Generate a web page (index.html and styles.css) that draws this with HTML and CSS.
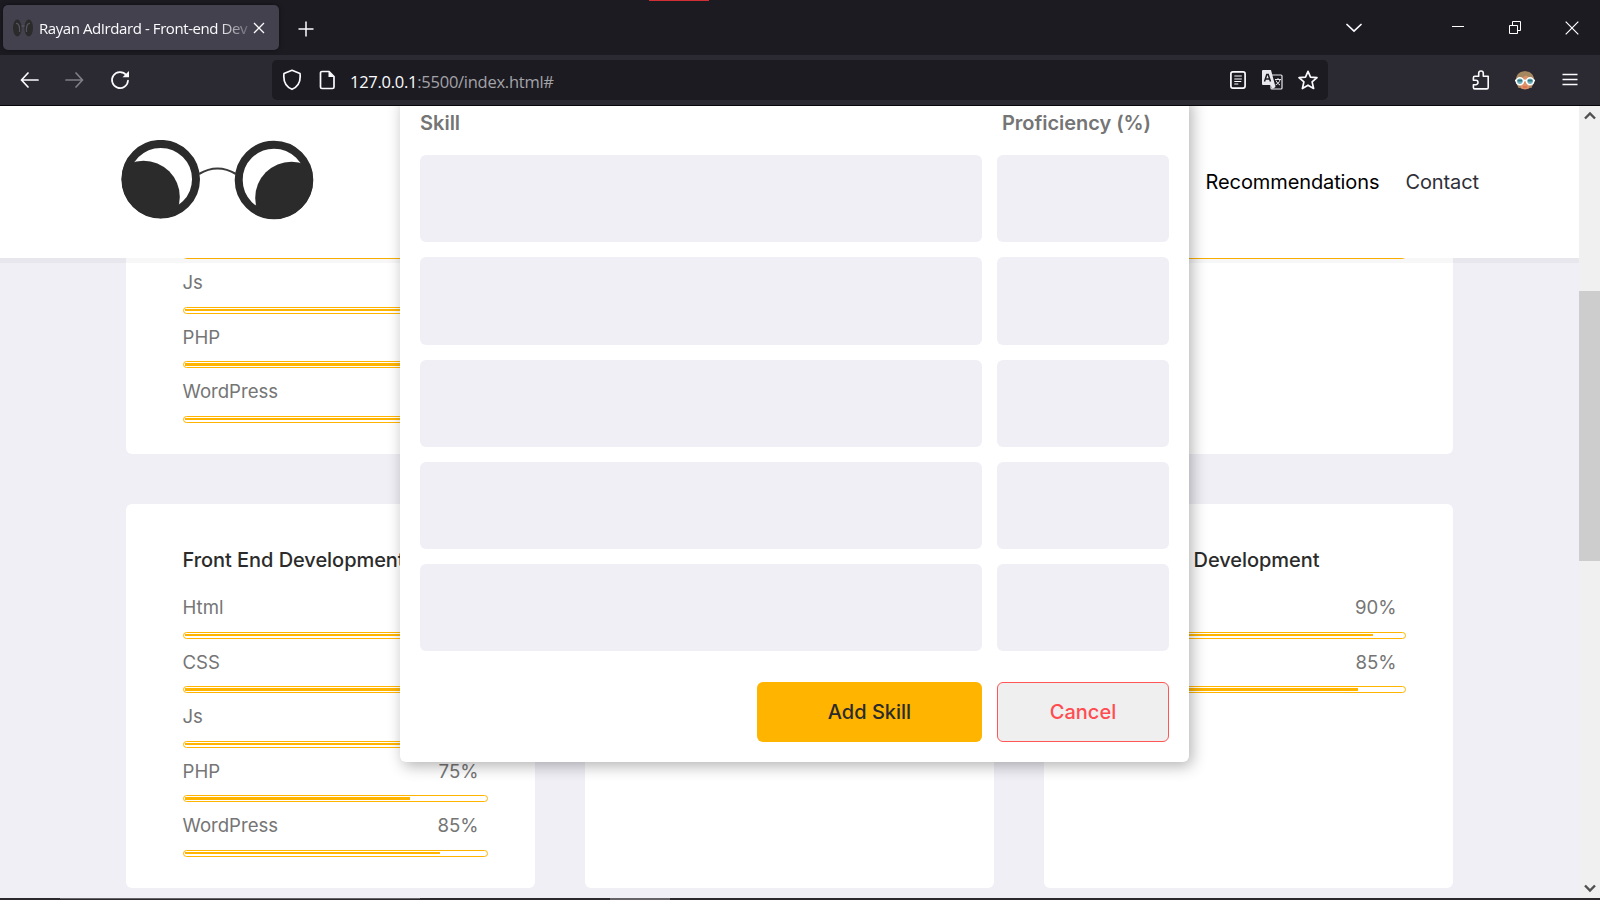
FILE: index.html
```html
<!DOCTYPE html>
<html lang="en">
<head>
<meta charset="utf-8">
<title>Rayan AdIrdard - Front-end Developer</title>
<link rel="stylesheet" href="styles.css">
</head>
<body>
<div class="tabbar">
  <div class="tab">
    <svg class="favicon" width="20" height="18" viewBox="0 0 20 18"><g fill="#2b2b2b"><ellipse cx="4.3" cy="9" rx="4.3" ry="8.5"/><ellipse cx="15.7" cy="9" rx="4.3" ry="8.5"/></g><path d="M3 4.500C6 4 7 8 6.500 13M17 4.500C14 4 13 8 13.500 13M8.500 7h3" fill="none" stroke="#55535e" stroke-width="1.300"/></svg>
    <span class="tab-title">Rayan AdIrdard - Front-end Dev</span>
    <svg class="tab-close" width="12" height="12" viewBox="0 0 12 12"><path d="M1 1l10 10M11 1L1 11" stroke="#fbfbfe" stroke-width="1.300"/></svg>
  </div>
  <svg class="newtab" width="16" height="16" viewBox="0 0 16 16"><path d="M8 .5v15M.5 8h15" stroke="#fbfbfe" stroke-width="1.500"/></svg>
  <div class="window-controls">
    <svg width="16" height="10" viewBox="0 0 16 10"><path d="M1 1.500l7 6.500 7-6.500" fill="none" stroke="#fbfbfe" stroke-width="1.700" stroke-linecap="round"/></svg>
    <svg width="12" height="12" viewBox="0 0 12 12"><path d="M0 4.500h12" stroke="#fff"/></svg>
    <svg width="12" height="13" viewBox="0 0 12 13"><path d="M.5 4.500h8v8h-8zM3.500 4.500v-4h8v9h-3" fill="none" stroke="#fff"/></svg>
    <svg width="14" height="14" viewBox="0 0 14 14"><path d="M.7.700l12.600 12.600M13.300.7L.7 13.300" stroke="#fff" stroke-width="1.200"/></svg>
  </div>
  <div class="top-strip"></div>
</div>
<div class="toolbar">
  <div class="nav-buttons">
    <svg width="19" height="16" viewBox="0 0 19 16"><path d="M18 8H1.500M8 1L1.500 8 8 15" fill="none" stroke="#fbfbfe" stroke-width="1.700" stroke-linecap="round" stroke-linejoin="round"/></svg>
    <svg width="19" height="16" viewBox="0 0 19 16"><path d="M1 8h16.500M11 1l6.500 7L11 15" fill="none" stroke="#7f7e86" stroke-width="1.700" stroke-linecap="round" stroke-linejoin="round"/></svg>
    <svg width="20" height="20" viewBox="0 0 20 20"><path d="M16.200 5A8 8 0 1 0 18 10.500" fill="none" stroke="#fbfbfe" stroke-width="1.700" stroke-linecap="round"/><path d="M19 1v6.200h-6.500z" fill="#fbfbfe"/></svg>
  </div>
  <div class="urlbar">
    <svg width="20" height="22" viewBox="0 0 20 22"><path d="M10 1.300L18 4.500C18.800 11 16.500 17.500 10 20.300 3.500 17.500 1.200 11 2 4.500z" fill="none" stroke="#fbfbfe" stroke-width="1.700" stroke-linejoin="round"/></svg>
    <svg class="page-icon" width="16" height="20" viewBox="0 0 16 20"><path d="M3 1.500h7l5 5V17a1.500 1.500 0 0 1-1.500 1.500H3A1.500 1.500 0 0 1 1.500 17V3A1.500 1.500 0 0 1 3 1.500z" fill="none" stroke="#fbfbfe" stroke-width="1.700"/><path d="M9.500 1v6H15z" fill="#fbfbfe"/></svg>
    <span class="url"><b>127.0.0.1</b>:5500/index.html#</span>
    <div class="url-actions">
      <svg width="16" height="18" viewBox="0 0 16 18"><rect x=".9" y=".9" width="14.200" height="16.200" rx="2" fill="none" stroke="#fbfbfe" stroke-width="1.700"/><path d="M4.300 5h7.500M4.300 8h7.500M4.300 10.500h7M4.300 13h4" stroke="#fbfbfe" stroke-width="1.200"/></svg>
      <svg width="21" height="20" viewBox="0 0 21 20"><rect x="9" y="5" width="11" height="14" rx="1" fill="none" stroke="#e8e8ee" stroke-width="1.200"/><path d="M13 9.500h6M16 8v1.500M18 9.500c-.5 3-2.500 4.500-4.500 5.500M14 10.500c.8 2 2.500 3.500 4 4.500" fill="none" stroke="#e8e8ee"/><path d="M1 0h8l4.500 17-3 2-2-4H1a1 1 0 0 1-1-1V1a1 1 0 0 1 1-1z" fill="#e8e8ee"/><path d="M2.500 11.500l2.300-7h1.400l2.300 7M3.500 9h4" fill="none" stroke="#1c1b22" stroke-width="1.500"/></svg>
      <svg width="20" height="20" viewBox="0 0 20 20"><path d="M10 1.300l2.500 5.800 6.500.6-4.900 4.200 1.500 6.600L10 15.200l-5.600 3.300 1.500-6.600L1 7.700l6.500-.6z" fill="none" stroke="#fbfbfe" stroke-width="1.700" stroke-linejoin="round"/></svg>
    </div>
  </div>
  <div class="tools">
    <svg width="18" height="20" viewBox="0 0 18 20"><path d="M2.800 18.900h12a1.400 1.400 0 0 0 1.400-1.400V6.300H11.300V3.300a2.300 2.300 0 0 0-4.600 0v3H2.800a1.400 1.400 0 0 0-1.400 1.400v2.600h2.400a2.200 2.200 0 0 1 0 4.400H1.400v2.800a1.400 1.400 0 0 0 1.400 1.400z" fill="none" stroke="#fbfbfe" stroke-width="1.600" stroke-linejoin="round"/></svg>
    <svg width="20" height="19" viewBox="0 0 20 19"><circle cx="10" cy="9.500" r="9" fill="#dd9268"/><path d="M1 9.500C1 3 5 .3 10 .3S19 3 19 9.500L15.500 7 11 4.500 5 8z" fill="#a58860"/><path d="M1.500 12l2 5 2.500 0-1-4zM18.500 12l-2 5-2.500 0 1-4z" fill="#a58860"/><path d="M0 9.500h20" stroke="#fff" stroke-width="1.800"/><circle cx="4.900" cy="10.300" r="3.500" fill="#6eb0ba" stroke="#fff" stroke-width="1.600"/><circle cx="15.100" cy="10.300" r="3.500" fill="#6eb0ba" stroke="#fff" stroke-width="1.600"/><path d="M2.500 9.600h4.800M12.700 9.600h4.800" stroke="#2f7482" stroke-width="1.600"/><path d="M8 16h4" stroke="#e35b45"/></svg>
    <svg width="16" height="14" viewBox="0 0 16 14"><path d="M.5 1.500h15M.5 6.500h15M.5 11.500h15" stroke="#fbfbfe" stroke-width="1.500"/></svg>
  </div>
</div>
<div class="viewport">
  <main class="page">
    <header class="site-header">
      <svg class="logo" width="194" height="80" viewBox="0 0 194 80">
        <defs>
          <clipPath id="lens-left"><circle cx="39.700" cy="39.200" r="39"/></clipPath>
          <clipPath id="lens-right"><circle cx="153" cy="40" r="39"/></clipPath>
        </defs>
        <circle cx="39.700" cy="39.200" r="35.300" fill="#fff" stroke="#2b2b2b" stroke-width="8"/>
        <circle cx="153" cy="40" r="35.300" fill="#fff" stroke="#2b2b2b" stroke-width="8"/>
        <circle cx="22.500" cy="57" r="36.300" fill="#2b2b2b" clip-path="url(#lens-left)"/>
        <circle cx="170.500" cy="58" r="36.300" fill="#2b2b2b" clip-path="url(#lens-right)"/>
        <path d="M78 34Q96.500 23 115 34" fill="none" stroke="#3a3a3a" stroke-width="2.200"/>
      </svg>
      <nav class="site-nav"><a class="active">Recommendations</a><a>Contact</a></nav>
    </header>
    <section class="cards">
      <article class="card upper">
        <div class="skill"><div class="row"></div><div class="bar"><i style="width:95%"></i></div></div>
        <div class="skill"><div class="row"><span>Js</span></div><div class="bar"><i style="width:90%"></i></div></div>
        <div class="skill"><div class="row"><span>PHP</span></div><div class="bar"><i class="thick" style="width:75%"></i></div></div>
        <div class="skill"><div class="row"><span>WordPress</span></div><div class="bar"><i style="width:85%"></i></div></div>
      </article>
      <article class="card upper"></article>
      <article class="card upper">
        <div class="skill"><div class="row"></div><div class="bar"><i style="width:85%"></i></div></div>
      </article>
      <article class="card">
        <h3>Front End Development</h3>
        <div class="skill"><div class="row"><span>Html</span></div><div class="bar"><i style="width:90%"></i></div></div>
        <div class="skill"><div class="row"><span>CSS</span></div><div class="bar"><i class="thick" style="width:85%"></i></div></div>
        <div class="skill"><div class="row"><span>Js</span></div><div class="bar"><i style="width:90%"></i></div></div>
        <div class="skill"><div class="row"><span>PHP</span><span>75%</span></div><div class="bar"><i class="thick" style="width:75%"></i></div></div>
        <div class="skill"><div class="row"><span>WordPress</span><span>85%</span></div><div class="bar"><i style="width:85%"></i></div></div>
      </article>
      <article class="card"></article>
      <article class="card">
        <h3 class="end-title">Development</h3>
        <div class="skill"><div class="row end"><span>90%</span></div><div class="bar"><i style="width:90%"></i></div></div>
        <div class="skill"><div class="row end"><span>85%</span></div><div class="bar"><i class="thick" style="width:85%"></i></div></div>
      </article>
    </section>
    <form class="modal">
      <label>Skill</label><label class="second">Proficiency (%)</label>
      <div class="field"></div><div class="field"></div>
      <div class="field"></div><div class="field"></div>
      <div class="field"></div><div class="field"></div>
      <div class="field"></div><div class="field"></div>
      <div class="field"></div><div class="field"></div>
      <button type="button" class="add">Add Skill</button><button type="button" class="cancel">Cancel</button>
    </form>
  </main>
  <div class="scrollbar">
    <svg width="12" height="9" viewBox="0 0 12 9"><path d="M1 7.500l5-5 5 5" fill="none" stroke="#505050" stroke-width="2.400"/></svg>
    <div class="thumb"></div>
    <svg width="12" height="9" viewBox="0 0 12 9"><path d="M1 1.500l5 5 5-5" fill="none" stroke="#505050" stroke-width="2.400"/></svg>
  </div>
</div>
<footer class="taskbar"><div class="task-a"></div><div class="task-b"></div></footer>
</body>
</html>
```
FILE: styles.css
```css
* { box-sizing: border-box; }
body { margin: 0; width: 1600px; height: 900px; overflow: hidden; display: flex; flex-direction: column; font-family: Inter, "Liberation Sans", sans-serif; }
svg { display: block; flex: none; }

.tabbar { position: relative; height: 55px; background: #1c1b22; display: flex; align-items: flex-start; padding: 5px 21px 0 3px; }
.tab { width: 276px; height: 45px; border-radius: 5px; background: #42414d; display: flex; align-items: center; padding: 0 14px 0 10px; box-shadow: 0 0 4px rgba(0,0,0,.5); }
.tab-title { width: 213px; flex: none; margin-left: 6px; white-space: nowrap; font: 15px/22px "Open Sans", sans-serif; letter-spacing: -.42px; color: #fbfbfe; -webkit-mask-image: linear-gradient(90deg, #000 178px, transparent 218px); mask-image: linear-gradient(90deg, #000 178px, transparent 218px); }
.tab-close { margin-left: 1px; }
.newtab { margin: 16px 0 0 19px; }
.window-controls { margin-left: auto; height: 45px; display: flex; align-items: center; }
.window-controls svg:nth-child(2) { margin-left: 90px; }
.window-controls svg:nth-child(3) { margin-left: 45px; }
.window-controls svg:nth-child(4) { margin-left: 44px; }
.top-strip { position: absolute; left: 649px; top: 0; width: 60px; height: 1px; background: #d12f36; }

.toolbar { height: 51px; background: #2b2a33; border-bottom: 1px solid #08080b; display: flex; align-items: center; padding-right: 22px; }
.nav-buttons { width: 272px; display: flex; align-items: center; gap: 26px; padding-left: 20px; }
.urlbar { width: 1056px; height: 40px; border-radius: 5px; background: #1c1b22; display: flex; align-items: center; padding: 0 10px; }
.page-icon { margin-left: 17px; }
.url { margin-left: 15px; padding-top: 4px; font: 16.500px/24px "Open Sans", sans-serif; letter-spacing: -.26px; color: #a3a3a8; }
.url b { font-weight: 400; color: #fbfbfe; }
.url-actions { margin-left: auto; display: flex; align-items: center; gap: 16px; }
.url-actions svg:nth-child(-n+2) { margin-right: -1px; margin-left: 1px; }
.tools { margin-left: auto; display: flex; align-items: center; gap: 26px; }
.tools svg:nth-child(2) { margin: 0 1px 0 -1px; }

.viewport { height: 792px; display: flex; }
.page { position: relative; width: 1579px; height: 792px; overflow: hidden; background: #f0eff6; }
.site-header { position: relative; z-index: 1; height: 152px; background: #fff; box-shadow: 0 5px 0 rgba(0,0,0,.03); display: flex; align-items: center; justify-content: space-between; padding: 0 100px 4px 121px; }
.site-nav { display: flex; gap: 26px; font-size: 20px; line-height: 24px; letter-spacing: -.1px; color: #2f2f38; padding-top: 3px; }
.site-nav .active { color: #000; }

.cards { display: grid; grid-template-columns: repeat(3, 409px); grid-template-rows: 196px 384px; column-gap: 50px; row-gap: 50px; padding-left: 126px; }
.card { background: #fff; border-radius: 6px; padding: 44px 48px 0 56.500px; }
.card.upper { padding-top: 0; border-radius: 0 0 6px 6px; }
.upper .skill:first-child { margin-top: -53.500px; }
.card h3 { margin: 0 0 12px; font-size: 20px; line-height: 24px; font-weight: 500; color: #2b2b2b; letter-spacing: -.05px; white-space: nowrap; }
.end-title { padding-left: 93px; }
.skill { height: 54.500px; display: flex; flex-direction: column; justify-content: flex-end; }
.row { height: 47.500px; width: 296px; display: flex; justify-content: space-between; font-size: 18.600px; line-height: 24px; padding-top: 11px; color: #757575; }
.row.end { justify-content: flex-end; }
.bar { height: 7px; flex: none; width: 305px; border: 1px solid #ffb400; border-radius: 4px; padding: 1px; background: #fff; }
.bar i { display: block; height: 2px; max-width: 300px; background: #ffb400; }
.bar i.thick { height: 3px; }

.modal { position: absolute; z-index: 2; left: 400px; top: -10px; width: 789px; height: 666px; background: #fff; border-radius: 6px; box-shadow: 3px 4px 15px rgba(0,0,0,.3); padding: 14px 20px 20px; display: grid; grid-template-columns: 562px 172px; grid-template-rows: 30px repeat(5, 87.300px) 60px; column-gap: 15px; row-gap: 15px; }
.modal label { font-size: 20px; line-height: 24px; font-weight: 600; color: #757575; padding-top: 1px; }
.modal .second { padding-left: 5px; letter-spacing: -.05px; }
.field { background: #f0eff6; border-radius: 6px; }
.modal button { height: 60px; margin-top: 15.500px; border-radius: 6px; font: 500 20px Inter, sans-serif; }
.add { width: 225px; justify-self: end; border: 0; background: #ffb400; color: #2b2b2b; }
.cancel { border: 1px solid #ff5555; background: #efefef; color: #ff4c51; }

.scrollbar { width: 21px; background: #f0f0f0; display: flex; flex-direction: column; align-items: center; padding: 5px 0; }
.thumb { width: 21px; height: 270px; background: #cdcdcd; margin: 171px 0 auto; }
.taskbar { height: 2px; background: #2c292c; display: flex; }
.task-a { margin-left: 60px; width: 360px; background: #656366; height: 1px; }
.task-b { margin-left: 190px; width: 60px; background: #656366; }
```
